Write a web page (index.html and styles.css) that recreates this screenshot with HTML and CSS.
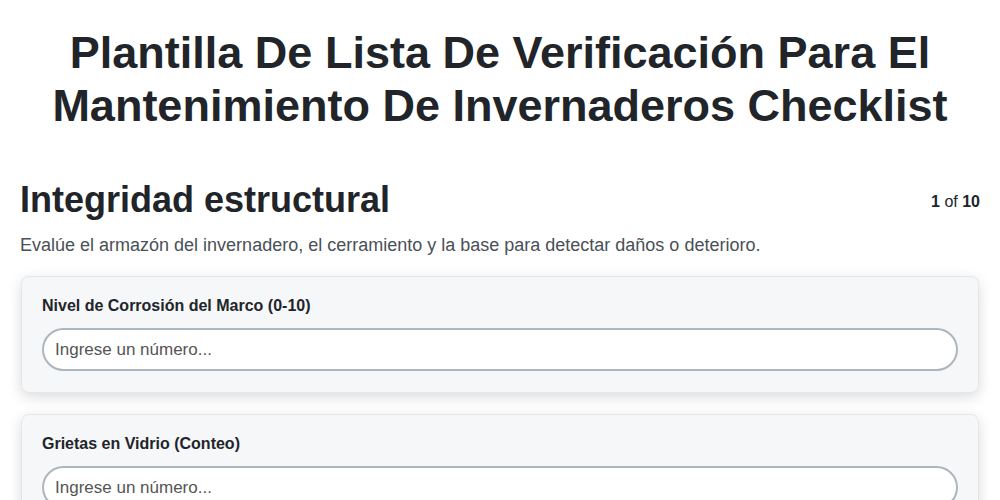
FILE: index.html
```html
<!DOCTYPE html>
<html lang="es">
<head>
<meta charset="UTF-8">
<meta name="viewport" content="width=device-width, initial-scale=1.0">
<link rel="stylesheet" href="styles.css">
<title>Checklist de Invernaderos</title>
</head>
<body>

<main class="page">

<h1 class="pageTitle">Plantilla De Lista De Verificación Para El Mantenimiento De Invernaderos Checklist</h1>

<section class="step">

<div class="stepHead">
<h2 class="stepTitle">Integridad estructural</h2>
<span class="stepCount"><b>1</b> of <b>10</b></span>
</div>

<p class="stepDesc">Evalúe el armazón del invernadero, el cerramiento y la base para detectar daños o deterioro.</p>

<div class="fieldList">

<div class="field">
<label class="fieldLabel" for="corrosion">Nivel de Corrosión del Marco (0-10)</label>
<input type="number" class="fieldInput" id="corrosion" placeholder="Ingrese un número...">
</div>

<div class="field">
<label class="fieldLabel" for="grietas">Grietas en Vidrio (Conteo)</label>
<input type="number" class="fieldInput" id="grietas" placeholder="Ingrese un número...">
</div>

</div>

</section>

</main>

</body>
</html>
```

FILE: styles.css
```css
*,*:before,*:after{
margin:0;
padding:0;
box-sizing:border-box;
}

body{
background:#fff;
color:#212529;
font-family:"Liberation Sans", Arial, sans-serif;
}

.page{
padding:26px 20px 20px;
}

.pageTitle{
font-size:45px;
line-height:53px;
font-weight:bold;
text-align:center;
color:#212529;
margin:0 20px 47px;
}

.stepHead{
display:flex;
justify-content:space-between;
align-items:flex-start;
}

.stepTitle{
font-size:36px;
line-height:42px;
font-weight:bold;
color:#212529;
}

.stepCount{
font-size:16px;
line-height:20px;
margin-top:13px;
color:#212529;
}

.stepDesc{
margin-top:11px;
font-size:18px;
line-height:26px;
color:#495057;
}

.fieldList{
display:flex;
flex-direction:column;
gap:21px;
margin:18px 1px 0;
}

.field{
padding:19px 20px 21px;
background:#f6f7f9;
border:1px solid #e4e6ea;
border-radius:8px;
box-shadow:0 4px 14px rgba(0,0,0,0.14);
}

.fieldLabel{
display:block;
font-size:16px;
line-height:20px;
font-weight:bold;
color:#212529;
margin-bottom:12px;
}

.fieldInput{
display:block;
width:100%;
height:43px;
padding:0 11px;
font-family:inherit;
font-size:17px;
color:#212529;
background:#fff;
border:2px solid #adb5bd;
border-radius:22px;
outline:none;
}

.fieldInput::placeholder{
color:#555;
}
```
